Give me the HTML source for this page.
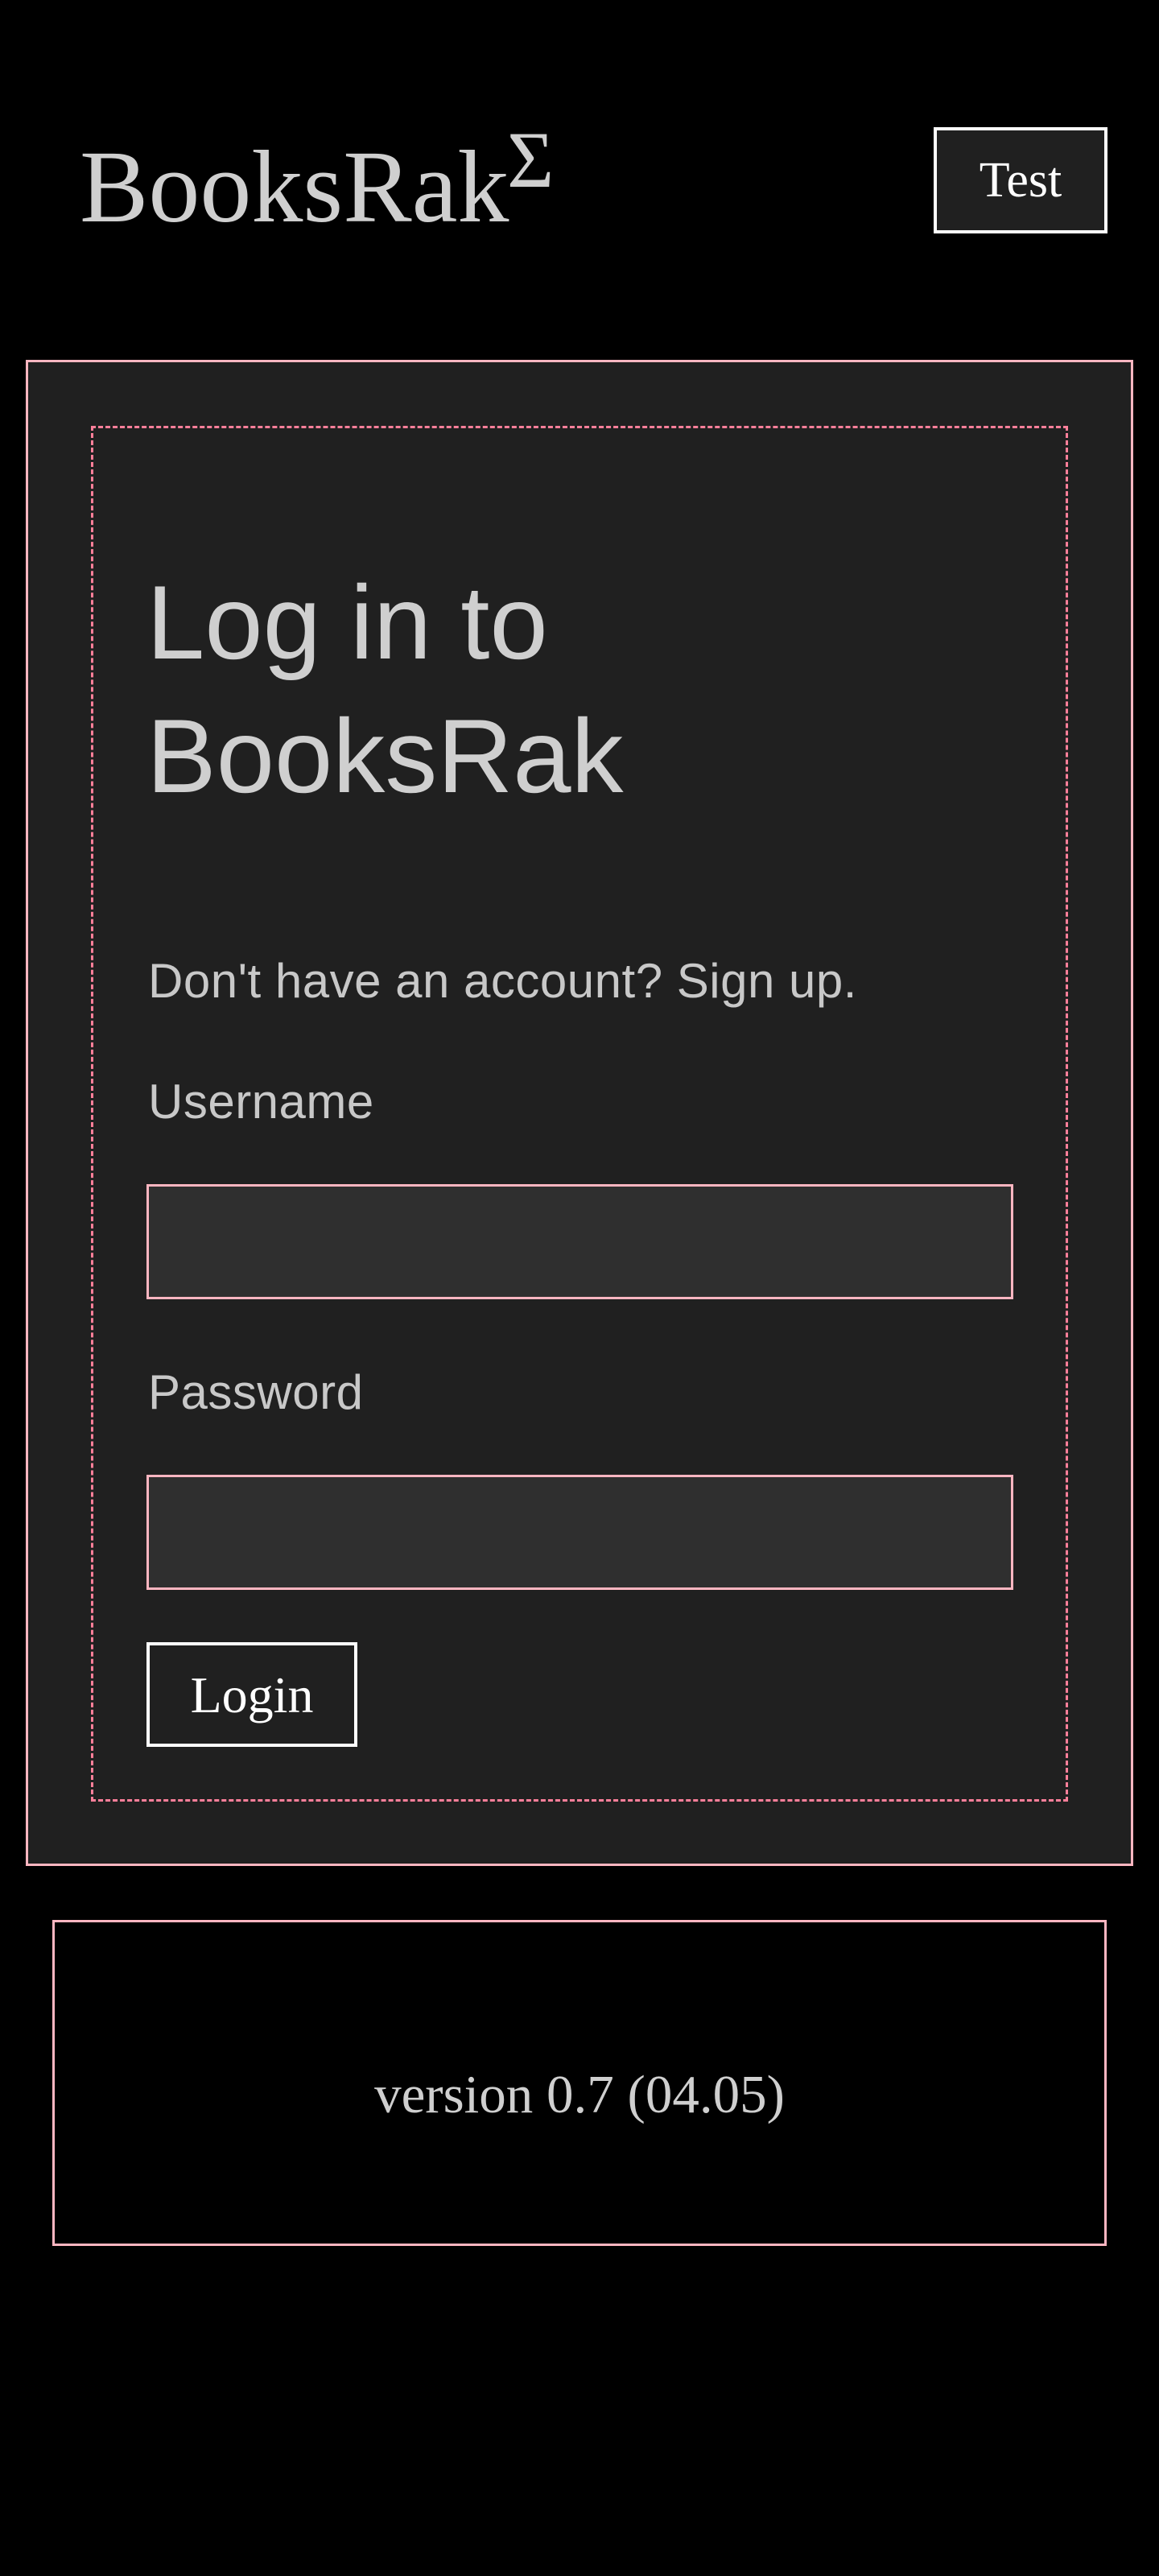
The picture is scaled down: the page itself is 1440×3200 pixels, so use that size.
<!DOCTYPE html>
<html><head><meta charset="utf-8"><style>
*{margin:0;padding:0;box-sizing:border-box}
html,body{width:1440px;height:3200px;background:#000;overflow:hidden}
body{position:relative;font-family:"Liberation Sans",sans-serif;color:#d0d0d0}
.abs{position:absolute;white-space:nowrap}
.logo{left:99px;top:152px;font-family:"Liberation Serif",serif;font-size:128px;line-height:160px;color:#cfcfcf}
.sig{left:630px;top:144px;font-family:"Liberation Serif",serif;font-size:100px;line-height:110px;color:#cfcfcf}
.test{left:1160px;top:158px;width:216px;height:132px;border:4px solid #fff;background:#202020;color:#fff;font-family:"Liberation Serif",serif;font-size:62px;text-align:center;line-height:124px}
.card{left:32px;top:447px;width:1376px;height:1871px;border:3px solid #ffb6c1;background:#202020}
.dash{left:113px;top:529px;width:1214px;height:1709px;border:3px dashed #ff7f9a}
.h{left:182px;font-size:130px;line-height:166px;color:#cfcfcf}
.t{left:184px;font-size:60px;color:#c8c8c8;letter-spacing:0.5px}
.inp{left:182px;width:1077px;height:143px;border:3px solid #ffb6c1;background:#2f2f2f}
.login{left:182px;top:2040px;width:262px;height:130px;border:4px solid #fff;color:#fff;font-family:"Liberation Serif",serif;font-size:64px;text-align:center;line-height:124px}
.foot{left:65px;top:2385px;width:1310px;height:405px;border:3px solid #ffb6c1}
.ver{left:0;width:1440px;top:2562px;text-align:center;font-family:"Liberation Serif",serif;font-size:67px;line-height:80px;color:#cfcfcf}
</style></head><body>
<div class="abs logo">BooksRak</div>
<div class="abs sig">Σ</div>
<div class="abs test">Test</div>
<div class="abs card"></div>
<div class="abs dash"></div>
<div class="abs h" style="top:690px">Log in to</div>
<div class="abs h" style="top:856px">BooksRak</div>
<div class="abs t" style="top:1182px;line-height:74px">Don't have an account? Sign up.</div>
<div class="abs t" style="top:1332px;line-height:74px">Username</div>
<div class="abs inp" style="top:1471px"></div>
<div class="abs t" style="top:1693px;line-height:74px">Password</div>
<div class="abs inp" style="top:1832px"></div>
<div class="abs login">Login</div>
<div class="abs foot"></div>
<div class="abs ver">version 0.7 (04.05)</div>
</body></html>
